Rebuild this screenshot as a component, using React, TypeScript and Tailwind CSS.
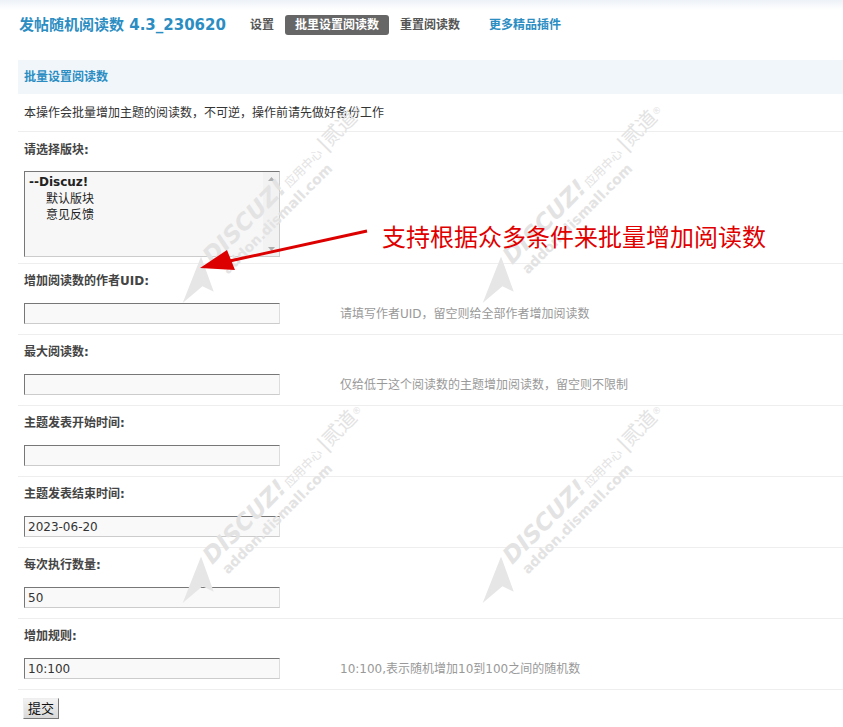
const fieldRows = [
  { label: "增加阅读数的作者UID:", value: "", hint: "请填写作者UID，留空则给全部作者增加阅读数" },
  { label: "最大阅读数:", value: "", hint: "仅给低于这个阅读数的主题增加阅读数，留空则不限制" },
  { label: "主题发表开始时间:", value: "", hint: "" },
  { label: "主题发表结束时间:", value: "2023-06-20", hint: "" },
  { label: "每次执行数量:", value: "50", hint: "" },
  { label: "增加规则:", value: "10:100", hint: "10:100,表示随机增加10到100之间的随机数" },
];

function Watermark({ className }: { className: string }) {
  return (
    <div className={`absolute pointer-events-none -translate-x-1/2 -translate-y-1/2 rotate-[-45deg] text-[#e3e3e3] ${className}`}>
      <div className="flex items-end">
        <svg width="46" height="34" viewBox="0 0 46 34" className="mr-[2px]">
          <polygon points="0,20 46,0 30,34 26,22" fill="#e6e6e6" />
        </svg>
        <div className="flex flex-col">
          <div className="leading-none whitespace-nowrap">
            <span className="italic font-bold text-[23px] font-['DejaVu_Sans',sans-serif]">DISCUZ!</span>
            <span className="text-[12px] ml-[2px]">应用中心</span>
            <span className="text-[20px] ml-[3px]">|贰道</span>
            <sup className="text-[9px]">®</sup>
          </div>
          <div className="font-bold text-[14px] leading-none mt-[2px] ml-[4px] font-['DejaVu_Sans',sans-serif]">addon.dismall.com</div>
        </div>
      </div>
    </div>
  );
}

export default function App() {
  return (
    <div className="relative min-h-[727px] overflow-hidden bg-white text-[12px] text-[#333] font-['DejaVu_Sans','Noto_Sans_CJK_SC',sans-serif]">
      {/* top nav */}
      <div className="h-[50px] flex items-center pl-[19px] bg-linear-to-b from-[#edf2f8] via-white via-[20%] to-white">
        <div className="text-[15px] font-bold text-[#2b8dc2]">发帖随机阅读数 4.3_230620</div>
        <div className="ml-[14px] flex items-center gap-[1px] font-bold leading-[20px]">
          <span className="px-[10px] text-[#555]">设置</span>
          <span className="px-[10px] rounded-[3px] bg-[#666] text-white">批里设置阅读数</span>
          <span className="px-[10px] text-[#555]">重置阅读数</span>
          <span className="ml-[8px] px-[10px] text-[#2b8dc2]">更多精品插件</span>
        </div>
      </div>

      <div className="ml-[18px] mt-[10px]">
        <div className="h-[34px] flex items-center pl-[6px] bg-[#f1f6fb] font-bold text-[#2b8dc2]">批量设置阅读数</div>
        <div className="pt-[11px] pb-[9px] pl-[6px] leading-[17px] border-b border-[#eee]">
          本操作会批量增加主题的阅读数，不可逆，操作前请先做好备份工作
        </div>

        <div className="pt-[10px] pb-[6px] pl-[6px] border-b border-[#eee]">
          <div className="leading-[17px] font-bold text-[#444]">请选择版块:</div>
          <div className="mt-[12px] w-[256px] h-[86px] flex border border-t-[#777] border-l-[#777] border-r-[#ccc] border-b-[#ccc] bg-[#f7f7f7]">
            <div className="flex-1 pl-[4px] pt-[2px] leading-[16.5px] text-[#222]">
              <div className="font-bold">--Discuz!</div>
              <div className="pl-[17px]">默认版块</div>
              <div className="pl-[17px]">意见反馈</div>
            </div>
            <div className="w-[16px] bg-[#f2f2f2] flex flex-col justify-between items-center py-[5px]">
              <svg width="7" height="4" viewBox="0 0 7 4"><polygon points="0,4 7,4 3.5,0" fill="#b0b0b0" /></svg>
              <svg width="7" height="4" viewBox="0 0 7 4"><polygon points="0,0 7,0 3.5,4" fill="#b0b0b0" /></svg>
            </div>
          </div>
        </div>

        {fieldRows.map((row) => (
          <div key={row.label} className="pt-[9px] pb-[10px] pl-[6px] border-b border-[#eee]">
            <div className="leading-[17px] font-bold text-[#444]">{row.label}</div>
            <div className="mt-[13px] flex items-center">
              <input
                type="text"
                defaultValue={row.value}
                className="w-[256px] h-[21px] px-[3px] text-[12px] text-[#333] bg-[#f9f9f9] border border-t-[#777] border-l-[#777] border-r-[#ddd] border-b-[#ccc] outline-none"
              />
              {row.hint && <span className="ml-[60px] text-[#999]">{row.hint}</span>}
            </div>
          </div>
        ))}

        <div className="pt-[8px] pl-[5px]">
          <button className="w-[36px] h-[21px] text-[13px] leading-none text-[#111] bg-linear-to-b from-[#f2f2f2] to-[#d9d9d9] border border-t-[#eee] border-l-[#eee] border-r-[#777] border-b-[#777]">
            提交
          </button>
        </div>
      </div>

      <Watermark className="left-[272px] top-[206px]" />
      <Watermark className="left-[572px] top-[206px]" />
      <Watermark className="left-[272px] top-[506px]" />
      <Watermark className="left-[572px] top-[506px]" />

      {/* annotation */}
      <svg className="absolute left-[195px] top-[222px] pointer-events-none" width="180" height="52" viewBox="0 0 180 52">
        <line x1="172" y1="9" x2="30" y2="40" stroke="#d00" strokeWidth="3" />
        <polygon points="5,46 32,28 40,48" fill="#d00" />
      </svg>
      <div className="absolute left-[382px] top-[220px] text-[24px] leading-[32px] text-[#e00000] font-['Noto_Sans_CJK_SC',sans-serif]">
        支持根据众多条件来批量增加阅读数
      </div>
    </div>
  );
}
